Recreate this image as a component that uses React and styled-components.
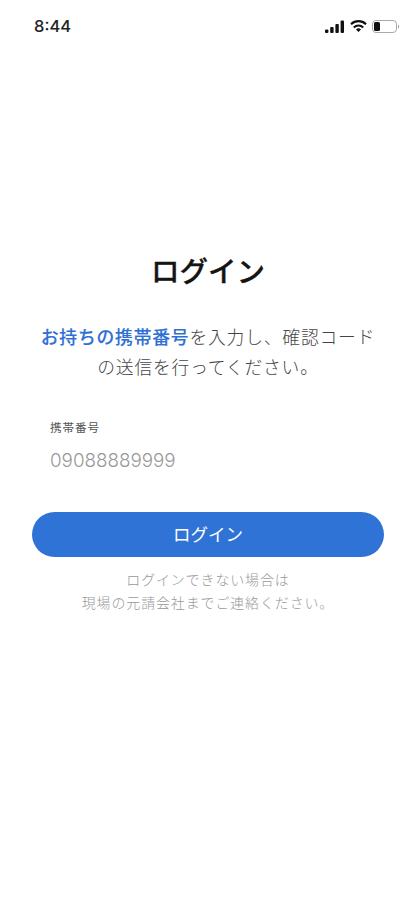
import styled, { createGlobalStyle } from 'styled-components';

const GlobalStyle = createGlobalStyle`
    * {
        box-sizing: border-box;
    }

    body {
        margin: 0;
        background-color: #fff;
        font-family: Inter, "Noto Sans CJK JP", sans-serif;
    }
`;

const Screen = styled.div`
    display: flex;
    flex-direction: column;
    height: 900px;
    overflow: hidden;
    background-color: #fff;
`;

const StatusBar = styled.header`
    display: flex;
    justify-content: space-between;
    align-items: center;
    height: 52px;
    padding: 0 15px 0 34px;
`;

const Clock = styled.span`
    color: #222;
    font-size: 16.5px;
    font-weight: 500;
`;

const StatusIcons = styled.div`
    display: flex;
    align-items: center;
    gap: 5px;
`;

const Main = styled.main`
    display: flex;
    flex-direction: column;
    padding: 200px 31px 0 32px;
`;

const Title = styled.h1`
    margin: 0;
    color: #141414;
    font-size: 28.5px;
    font-weight: 500;
    line-height: 40px;
    text-align: center;
    -webkit-text-stroke: 0.3px #141414;
`;

const Lead = styled.p`
    margin: 31px 0 0;
    color: #444;
    font-size: 17.8px;
    font-weight: 300;
    letter-spacing: 0.8px;
    line-height: 29.5px;
    text-align: center;
    white-space: nowrap;

    strong {
        color: #2f70d4;
        font-weight: 500;
        -webkit-text-stroke: 0.15px #2f70d4;
    }
`;

const Field = styled.label`
    display: flex;
    flex-direction: column;
    padding: 36px 18px 0;
`;

const FieldLabel = styled.span`
    color: #555;
    font-size: 11.6px;
    letter-spacing: 0.9px;
    line-height: 20px;
`;

const PhoneInput = styled.input`
    height: 30px;
    margin-top: 7px;
    padding: 0;
    border: none;
    outline: none;
    background: none;
    color: #999;
    font-family: inherit;
    font-size: 18.8px;
    font-weight: 300;
`;

const LoginButton = styled.button`
    height: 45px;
    margin-top: 37px;
    padding: 0 0 2px;
    border: none;
    border-radius: 23px;
    background-color: #3073d7;
    color: #fff;
    font-family: inherit;
    font-size: 17.5px;
`;

const Note = styled.p`
    margin: 11px 0 0;
    color: #999;
    font-size: 14px;
    font-weight: 300;
    letter-spacing: 0.85px;
    line-height: 23px;
    text-align: center;
`;

const SignalIcon = () => (
    <svg width="20" height="13" viewBox="0 0 20 13" fill="#111">
        <rect x="0" y="9.5" width="3.4" height="3.5" rx="1" />
        <rect x="5.2" y="7" width="3.4" height="6" rx="1" />
        <rect x="10.4" y="4" width="3.4" height="9" rx="1" />
        <rect x="15.6" y="0.5" width="3.4" height="12.5" rx="1" />
    </svg>
);

const WifiIcon = () => (
    <svg width="17" height="12" viewBox="0 0 17 12" fill="none" stroke="#111" strokeWidth="2.1">
        <path d="M1 4.2a10.8 10.8 0 0 1 15 0" />
        <path d="M3.8 7.4a6.7 6.7 0 0 1 9.4 0" />
        <path d="M6 9.5a3.7 3.7 0 0 1 5 0L8.5 12z" fill="#111" stroke="none" />
    </svg>
);

const BatteryIcon = () => (
    <svg width="28" height="13" viewBox="0 0 28 13" fill="none">
        <rect x="0.5" y="0.5" width="24" height="12" rx="3.5" stroke="#aaa" />
        <rect x="2" y="2" width="6" height="9" rx="1.5" fill="#111" />
        <path d="M26 4.5v4c1.7-.7 1.7-3.3 0-4z" fill="#aaa" />
    </svg>
);

const App = () => {
    return (
        <Screen>
            <GlobalStyle />
            <StatusBar>
                <Clock>8:44</Clock>
                <StatusIcons>
                    <SignalIcon />
                    <WifiIcon />
                    <BatteryIcon />
                </StatusIcons>
            </StatusBar>
            <Main>
                <Title>ログイン</Title>
                <Lead>
                    <strong>お持ちの携帯番号</strong>を入力し、確認コード
                    <br />
                    の送信を行ってください。
                </Lead>
                <Field>
                    <FieldLabel>携帯番号</FieldLabel>
                    <PhoneInput type="tel" defaultValue="09088889999" />
                </Field>
                <LoginButton type="button">ログイン</LoginButton>
                <Note>
                    ログインできない場合は
                    <br />
                    現場の元請会社までご連絡ください。
                </Note>
            </Main>
        </Screen>
    );
};

export default App;
